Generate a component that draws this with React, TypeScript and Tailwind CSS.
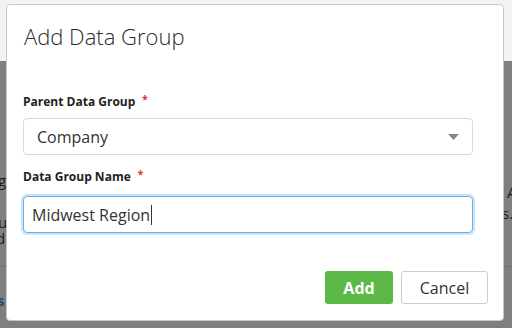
export default function App() {
  return (
    <div className="relative w-[512px] h-[328px] overflow-hidden font-['Open_Sans',sans-serif] text-[#333]">
      {/* page behind the overlay */}
      <div className="h-[61px] bg-[#f2f2f2]" />
      <div className="relative h-[267px] bg-[#7f7f7f] text-[#1d1d1d] text-[15px] leading-none">
        <span className="absolute left-[-2px] top-[112px]">g</span>
        <span className="absolute left-[-2px] top-[154px]">u</span>
        <span className="absolute left-[-4px] top-[170px]">d</span>
        <div className="absolute left-0 right-0 top-[205px] border-t border-[#6f6f6f]" />
        <span className="absolute left-[-3px] top-[232px] font-bold text-[#1f4e79]">s</span>
        <span className="absolute left-[507px] top-[124px]">A</span>
        <span className="absolute left-[502px] top-[145px]">s.</span>
      </div>

      {/* modal */}
      <div className="absolute left-[6px] top-[4px] w-[498px] h-[317px] bg-white rounded-[4px] border border-[#c8c8c8] flex flex-col">
        <h1 className="pl-[17px] pt-[17px] text-[22px] font-light leading-[28px] text-[#2b2b2b]">
          Add Data Group
        </h1>

        <div className="px-[16px] pt-[44px]">
          <label className="flex items-start text-[12px] font-bold text-[#222] leading-[16px]">
            Parent Data Group
            <span className="ml-[7px] text-[#d9302c] text-[10px] leading-[10px]">*</span>
          </label>
          <div className="mt-[8px] h-[37px] w-[450px] rounded-[4px] border border-[#d9d9d9] flex items-center justify-between pl-[13px] pr-[13px]">
            <span className="text-[16px] text-[#333]">Company</span>
            <svg width="11" height="6" viewBox="0 0 11 6">
              <path d="M0 0 L11 0 L5.5 6 Z" fill="#888" />
            </svg>
          </div>

          <label className="mt-[14px] flex items-start text-[12px] font-bold text-[#222] leading-[16px]">
            Data Group Name
            <span className="ml-[7px] text-[#d9302c] text-[10px] leading-[10px]">*</span>
          </label>
          <div className="mt-[11px] h-[37px] w-[450px] rounded-[4px] border border-[#66afe9] shadow-[0_0_0_2px_rgba(102,175,233,0.35)] flex items-center pl-[8px]">
            <span className="text-[16px] text-[#333]">Midwest Region</span>
            <span className="ml-[1px] w-px h-[20px] bg-[#333]" />
          </div>
        </div>

        <div className="mt-auto mb-[16px] pr-[15px] flex justify-end gap-[8px]">
          <button className="w-[68px] h-[33px] rounded-[3px] bg-[#5cb947] text-white text-[16px] font-bold">
            Add
          </button>
          <button className="w-[87px] h-[33px] rounded-[3px] border border-[#ccc] bg-white text-[#333] text-[16px]">
            Cancel
          </button>
        </div>
      </div>
    </div>
  );
}
